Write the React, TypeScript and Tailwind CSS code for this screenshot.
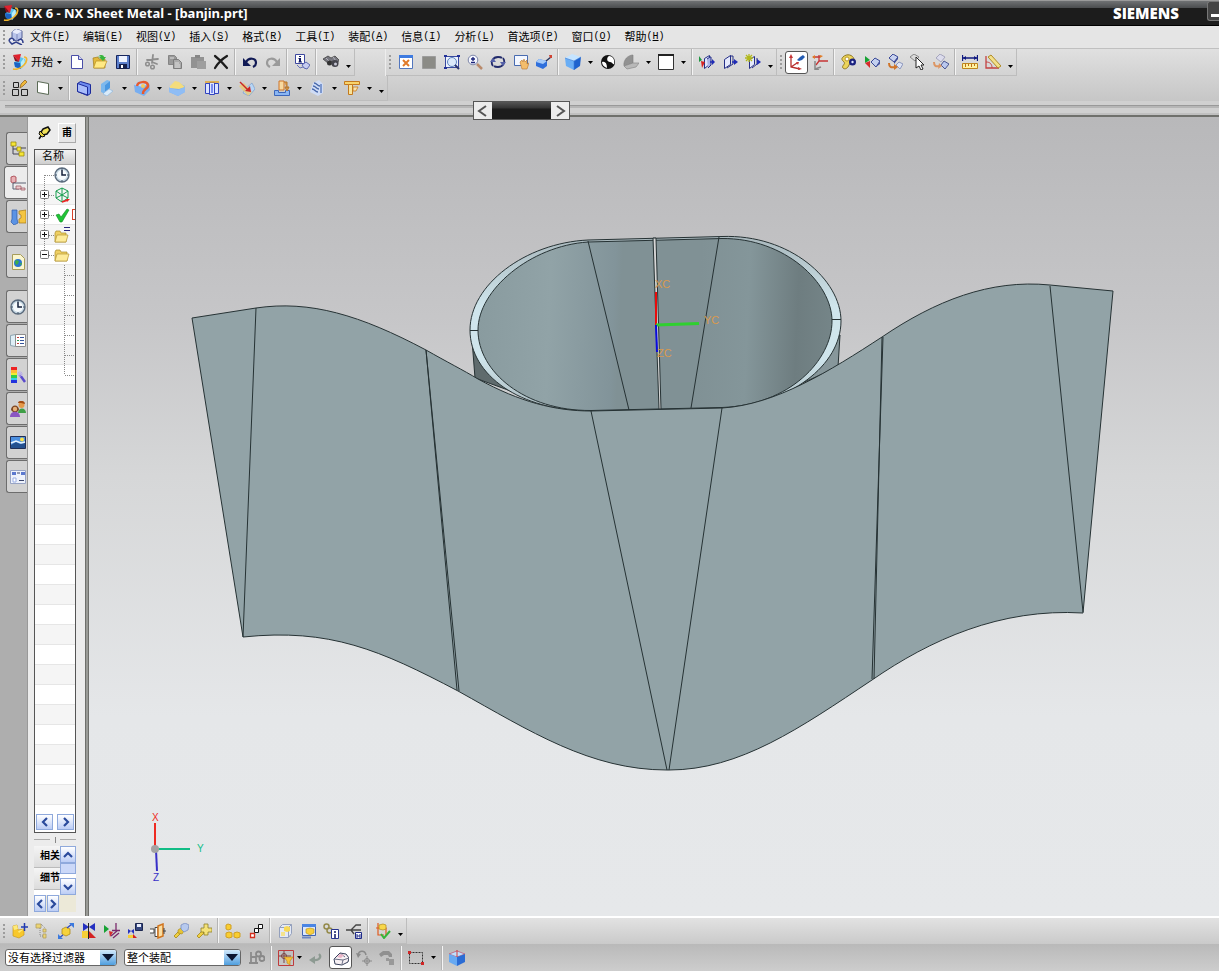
import { FC, ReactNode } from 'react';

const frame = { fill: 'none', strokeWidth: 1 };

const icons: Record<string, ReactNode> = {
  nx: (
    <>
      <path d="M8 3l5 2 1 4-5 6-6-2-1-4z" fill="#5cc4ee" />
      <path d="M9 8l3-4 1 5-4 6z" fill="#b9ecf7" />
      <path d="M2 8l6 1 1 6-6-2z" fill="#1b62c4" />
      <path d="M1 1l8-1-2 8z" fill="#e0212e" />
      <path d="M1 1l6 7-4-1z" fill="#8a0f1c" />
      <path d="M12 3c4 0 3 5 0 8s-7 5-11 4" stroke="#f0b52c" strokeWidth="1.700" fill="none" />
    </>
  ),
  part: (
    <>
      <path d="M4 3l4-3 6 2v7l-5 3-5-2z" fill="#b9c4ea" stroke="#515e94" />
      <path d="M4 3l5 2 5-3-6-2z" fill="#e9edfb" />
      <path d="M9 5v6" stroke="#7c88bb" fill="none" />
      <path d="M1 12c1-4 5-3 5 0M10 12c2-3 5-2 5 2M1 12l3 3 4-2 6 3" stroke="#31408a" strokeWidth="1.500" fill="#e7ebfa" />
    </>
  ),
  newFile: (
    <>
      <path d="M2.500 1.500h7l4 4v9h-11z" fill="#fff" stroke="#4a4fa8" />
      <path d="M9.500 1.500v4h4" fill="#d5d8f2" stroke="#4a4fa8" />
    </>
  ),
  open: (
    <>
      <path d="M1 4l5-1 1 2h6v9H2z" fill="#e2b93c" stroke="#a17c1c" strokeWidth=".7" />
      <path d="M4 7h11l-3 7H1.500z" fill="#ffe984" stroke="#b78f22" strokeWidth=".7" />
      <path d="M6 3c2-3 6-2 6 0h2l-3 4-4-4h2c-1-1-2-1-3 0z" fill="#37b53c" />
    </>
  ),
  save: (
    <>
      <path d="M1.500 1.500h13v13h-13z" fill="#5d80cc" stroke="#17265e" />
      <path d="M4 2h8v6H4z" fill="#eef3ff" />
      <path d="M4 10h8v5H4z" fill="#15204c" />
      <path d="M6 11h2v3H6z" fill="#fff" />
    </>
  ),
  cut: (
    <>
      <path d="M9 1L8 9M3 6l11-1M8 8l5 2" stroke="#8e8e8e" strokeWidth="1.800" fill="none" strokeLinecap="round" />
      <circle cx="3.500" cy="10" r="1.800" stroke="#8e8e8e" strokeWidth="1.500" fill="none" />
      <circle cx="8.500" cy="13" r="1.800" stroke="#8e8e8e" strokeWidth="1.500" fill="none" />
    </>
  ),
  copy: (
    <>
      <path d="M1.500 1.500h6l2 2v7h-8z" fill="#999" stroke="#858585" />
      <path d="M6.500 5.500h5l3 3v6h-8z" fill="#aaa" stroke="#7c7c7c" />
      <path d="M3 4h4M8 9h4M8 11h5M8 13h5" stroke="#ddd" />
    </>
  ),
  paste: (
    <>
      <path d="M1 3h13v11H1z" fill="#929292" />
      <path d="M5 1h5v3H5z" fill="#868686" />
      <path d="M7 7h9v8H7z" fill="#9e9e9e" />
    </>
  ),
  del: <path d="M2 2c4 3 8 7 12 12M14 2C9 5 5 9 2 14" stroke="#1c1c1c" strokeWidth="2.200" fill="none" strokeLinecap="round" />,
  undo: (
    <>
      <path d="M4 8c3-5 10-4 10 1 0 2-1 3-3 4" stroke="#111a55" strokeWidth="2.200" fill="none" />
      <path d="M1 4v8h8z" fill="#111a55" />
    </>
  ),
  redo: (
    <>
      <path d="M12 8C9 3 2 4 2 9c0 2 1 3 3 4" stroke="#9a9a9a" strokeWidth="2.200" fill="none" />
      <path d="M15 4v8H7z" fill="#9a9a9a" />
    </>
  ),
  info: (
    <>
      <path d="M1.500.500h9v9h-9z" fill="#fff" stroke="#3c479e" />
      <path d="M5 2h2v1H5zM4.500 4H7v3.500h1v1H4.500v-1H5V5h-.5z" fill="#111a66" />
      <path d="M8 11l4-3 4 3-3 4-3-1z" fill="#c7cdf1" stroke="#5f69b0" />
      <path d="M3 11l3 3 3-1" stroke="#6670b8" fill="none" />
    </>
  ),
  find: (
    <>
      <path d="M0 5l5-3 3 2 4-2 4 4-2 4-5-3-3 3z" fill="#77777f" stroke="#333" strokeWidth=".7" />
      <path d="M3 4l3 3M10 3l3 4" stroke="#b4b4bd" />
      <circle cx="6.500" cy="9" r="2.500" fill="#333" />
      <circle cx="12" cy="9.500" r="3.500" fill="#44444c" />
      <circle cx="12.500" cy="10" r="1.500" fill="#c6c6d4" />
    </>
  ),
  fit: (
    <>
      <path d="M1.500 1.500h13v13h-13z" fill="#fff" stroke="#5276bd" />
      <path d="M1 1h14v3H1z" fill="#3f7be0" />
      <path d="M5 6l6 6m0-6l-6 6" stroke="#e07a2a" strokeWidth="2" />
    </>
  ),
  gray: <path d="M1.500 2.500h13v12h-13z" fill="#8b8b86" stroke="#9c9c9c" />,
  zoomBox: (
    <>
      <path d="M1.500 2.500h13v11h-13z" fill="#eef3fd" stroke="#39499f" />
      <circle cx="8" cy="8" r="4.500" fill="#dbe9fb" stroke="#5d83bf" />
      <path d="M11 11l4 4" stroke="#29346f" strokeWidth="2" />
      <path d="M0 1h3v2H0zM13 1h3v2h-3zM0 13h3v2H0z" fill="#223199" />
    </>
  ),
  zoomIn: (
    <>
      <circle cx="6" cy="6" r="4.800" fill="#f5f7ff" stroke="#7c85a8" />
      <path d="M6 3v4M4 5h4M4 8.500h4" stroke="#1a237a" strokeWidth="1.300" />
      <path d="M10 10l5 5" stroke="#b98a6b" strokeWidth="2.500" />
    </>
  ),
  rotate: (
    <>
      <path d="M3 12C0 8 3 3 8 3c2 0 3 0 4 1M13 4c3 4 0 9-5 9-2 0-3 0-4-1" stroke="#222b6b" strokeWidth="1.800" fill="none" />
      <path d="M0 8l3-4 3 4zM16 8l-3 4-3-4z" fill="#5460a8" />
    </>
  ),
  pan: (
    <>
      <path d="M1.500 1.500h13v10h-13z" fill="#f3f7ff" stroke="#486bb0" />
      <path d="M7 8l2-2 1 2 1-3 1 3 2-2v4l2-1-2 6H9z" fill="#f3bd6c" stroke="#ba762c" strokeWidth=".6" />
    </>
  ),
  brush: (
    <>
      <path d="M0 8l3-3 8 2v5l-4 3-7-3z" fill="#2f6fdc" />
      <path d="M0 8l3-3 8 2-4 3z" fill="#a4caf9" />
      <path d="M10 7l5-4" stroke="#29355e" strokeWidth="1.500" />
      <path d="M13 1h3v3h-2z" fill="#cf4232" />
    </>
  ),
  cube: (
    <>
      <path d="M0 4l7-4 9 3-7 4z" fill="#c5e4ff" />
      <path d="M0 4l9 3v9l-8-4z" fill="#6aaef5" />
      <path d="M9 7l7-4-1 9-6 4z" fill="#1f63ce" />
      <path d="M0 4l9 3 7-4M9 7v9" stroke="#3a7cd8" strokeWidth=".6" fill="none" />
    </>
  ),
  contrast: (
    <>
      <circle cx="8" cy="8" r="7" fill="#111" />
      <path d="M9 2c4 0 6 4 5 8-1 1-2-2-4-2-3 0-4-4-1-6zM2 8c3-1 5 1 5 6-3-1-5-3-5-6z" fill="#fff" />
    </>
  ),
  wedge: (
    <>
      <path d="M1 12C0 6 5 1 10 1v8z" fill="#929292" stroke="#7d7d7d" strokeWidth=".6" />
      <path d="M10 9l6 0-3 4-9 2-3-3z" fill="#b9b9b9" stroke="#8a8a8a" strokeWidth=".7" />
    </>
  ),
  white: (
    <>
      <path d="M.500.500h15v15H.500z" fill="#fff" stroke="#333" />
      <path d="M0 1h16" stroke="#222" strokeWidth="2" />
    </>
  ),
  slabRed: (
    <>
      <path d="M5.500 4.500l5-3v9l-5 4z" fill="#dfe3fb" stroke="#252f86" />
      <path d="M8 5l3-2h1v8l-3 3" fill="#aab2e6" stroke="#252f86" />
      <path d="M11 8h3" stroke="#1f2bb5" strokeWidth="1.500" />
      <path d="M13 5l3 3-3 3z" fill="#1f2bb5" />
      <path d="M0 2v6l3-2z" fill="#1e9540" />
      <path d="M2 7l4 1-3 6z" fill="#d72121" />
    </>
  ),
  slab: (
    <>
      <path d="M2.500 5.500l6-4v9l-6 4z" fill="#e5e9fc" stroke="#252f86" />
      <path d="M5 14l6-4V2H8" fill="none" stroke="#252f86" />
      <path d="M10 8h3" stroke="#1f2bb5" strokeWidth="1.500" />
      <path d="M12 5l4 3-4 3z" fill="#1f2bb5" />
    </>
  ),
  slabStar: (
    <>
      <path d="M4.500 5.500l5-3v8l-5 4z" fill="#e5e9fc" stroke="#252f86" />
      <path d="M7 14l5-4V4" fill="none" stroke="#252f86" />
      <path d="M12 5l4 3-4 3z" fill="#1f2bb5" />
      <path d="M4 0v8M0 4h8M1 1l6 6M7 1L1 7" stroke="#b2b91c" strokeWidth="1.300" />
    </>
  ),
  csys: (
    <>
      <path d="M2 3v10l9 2M2 13l6-4" stroke="#b62d2d" fill="none" strokeWidth="1.300" />
      <path d="M0 4l2-4 2 4zM9 13l4 2-4 1zM7 8h3l-1 3z" fill="#c63636" />
      <path d="M8 6l3-3 3-2 2 2-3 3-3 1z" fill="#245cb3" />
    </>
  ),
  csysMove: (
    <>
      <path d="M1 3h7M7 1v6h9M7 7l-3 4" stroke="#c63636" fill="none" strokeWidth="1.300" />
      <path d="M3 7v8l6-2M3 15l4 1" stroke="#888" fill="none" strokeWidth="1.500" />
      <path d="M0 3l3-2v4zM8 1l3 1-3 2z" fill="#e07c28" />
    </>
  ),
  palette: (
    <>
      <path d="M2 3c4-4 10-2 11 2s-4 3-5 6-4 5-6 3 3-4 1-6-3-3-1-5z" fill="#ecd45c" stroke="#907722" />
      <circle cx="6" cy="5" r="2" fill="#fff" stroke="#b89828" />
      <circle cx="11.500" cy="8" r="3.500" fill="#1b2280" />
      <circle cx="11.500" cy="8" r="1.200" fill="#e2e6ff" />
    </>
  ),
  playCube: (
    <>
      <path d="M1 2v7l5-3z" fill="#17a233" />
      <path d="M1 9l5-2v7z" fill="#d62b2b" />
      <path d="M7 8l4-4 5 3-4 6z" fill="#c3d0ef" stroke="#384796" />
      <path d="M12 13l4-6v3z" fill="#46549f" />
    </>
  ),
  cubes: (
    <>
      <path d="M2 4l4-4 5 3-4 5z" fill="#c8d2ef" stroke="#384796" />
      <path d="M7 8l4-5v2l-4 5z" fill="#384796" />
      <path d="M9 11l3-3 4 2-3 5z" fill="#dde3f3" stroke="#8d97bd" />
      <path d="M2 9c0 4 2 5 6 4" stroke="#cf7429" strokeWidth="2" fill="none" />
      <path d="M7 10l4 3-4 3z" fill="#cf7429" />
    </>
  ),
  pointer: (
    <>
      <path d="M0 3l4-3 5 3-4 4z" fill="#dadada" stroke="#888" />
      <path d="M6 3v11l3-2 2 4 2-1-2-4h3z" fill="#fff" stroke="#222" />
    </>
  ),
  cubesGray: (
    <>
      <path d="M3 4l4-4 5 3-4 5z" fill="#dcdcec" stroke="#a5a5bd" />
      <path d="M8 11l3-4 5 3-4 5z" fill="#bac8ee" stroke="#4a5590" />
      <path d="M1 8c0 4 2 5 5 4" stroke="#dc9664" strokeWidth="2" fill="none" />
      <path d="M6 9l3 3-4 3z" fill="#dc9664" />
    </>
  ),
  ruler: (
    <>
      <path d="M.500 1v6M15.500 1v6M1 4h14" stroke="#111a80" strokeWidth="1.300" />
      <path d="M1 4l3-2v4zM15 4l-3-2v4z" fill="#111a80" />
      <path d="M.500 9.500h15v5H.500z" fill="#fff3a0" stroke="#be861d" />
      <path d="M3.500 10v3M6.500 10v2M9.500 10v3M12.500 10v2" stroke="#be6e1d" />
    </>
  ),
  angle: (
    <>
      <path d="M1 2v12h13" stroke="#c34242" fill="none" strokeWidth="1.300" />
      <path d="M1 8c4 0 6 2 6 6" stroke="#c34242" fill="none" />
      <path d="M3 3l3-2 10 11-3 2z" fill="#f2e08a" stroke="#b08a26" />
    </>
  ),
  sketch: (
    <>
      <path d="M1.500 2.500h5v5h-5zM.500 9.500h6v6h-6zM9.500 9.500h6v6h-6z" stroke="#222" {...frame} />
      <path d="M8 8l1-4 4-4 2 2-4 4z" fill="#f0b93a" stroke="#8a5a12" strokeWidth=".7" />
    </>
  ),
  sheet: <path d="M2.500 1.500l11 2v11l-11-2z" fill="#fff" stroke="#5a6a55" />,
  tab: (
    <>
      <path d="M1.500 3.500l3-2 10 3v9l-3 2-10-4z" fill="#6e8cf0" stroke="#1c2a9a" />
      <path d="M1.500 3.500l10 3.500v8l-10-3.500z" fill="#a9bdfb" stroke="#1c2a9a" />
    </>
  ),
  flange: (
    <>
      <path d="M2 4l6-4 3 1-5 4v9l-4-2z" fill="#7cb8ee" />
      <path d="M6 5l5-4v7l-5 4z" fill="#4a98e2" />
      <path d="M6 12l4-3 4 2-6 5-4-2z" fill="#d9ebfa" stroke="#8ab3dc" strokeWidth=".6" />
    </>
  ),
  contour: (
    <>
      <path d="M0 5l6-4 9 2 1 7-6 6-9-4z" fill="#78aef0" />
      <path d="M0 5l6-4 9 2-6 4z" fill="#bcd9fa" />
      <path d="M3 6c1-5 10-5 11-1s-5 3-5 9" stroke="#e65a2e" strokeWidth="2.500" fill="none" />
      <circle cx="9" cy="6" r="2" fill="#f7c95c" />
    </>
  ),
  lofted: (
    <>
      <path d="M0 8l8-6 8 4v6l-7 4-9-4z" fill="#7eb1f2" />
      <path d="M1 6l5-5 4 1 6 5-6 2-9-1z" fill="#f4dc7c" />
      <path d="M0 8l9 2 7-3v5l-7 4-9-4z" fill="#8fbdf5" />
    </>
  ),
  bend: (
    <>
      <path d="M1.500 3.500h4v10h-4zM5.500 2.500h5v12h-5zM10.500 3.500h4v10h-4z" fill="#dce4ff" stroke="#3244c0" />
      <path d="M7 4h2v9H7z" fill="#7b8df0" />
      <path d="M1 2h14" stroke="#e5a62e" strokeWidth="1.500" />
    </>
  ),
  unbend: (
    <>
      <path d="M6 9l7-6 3 6-6 7-6-3z" fill="#b7d6f6" stroke="#6d96c9" strokeWidth=".6" />
      <path d="M0 6l5-3 8 9-4 4z" fill="#f2c763" opacity=".7" />
      <path d="M1 2l8 8" stroke="#c92626" strokeWidth="1.500" />
      <path d="M12 12l-6-1 5-5z" fill="#c92626" />
    </>
  ),
  punch: (
    <>
      <path d="M.500 10.500h4v2h7v-2h4v5h-15z" fill="#8ab6f3" stroke="#3d66ba" />
      <path d="M5 1h5v9H5z" fill="#f7d9a0" stroke="#cf7429" />
      <path d="M10 2h3v6M11 7l2 4 2-4z" stroke="#b5742a" fill="#d99a4a" />
    </>
  ),
  louver: (
    <>
      <path d="M4 3l6-3 4 4v9l-5 3-8-4z" fill="#cfdcf5" />
      <path d="M5 3c3 0 3 3 6 3M4 6c3 0 3 3 6 3M3 9c3 0 3 3 6 3" stroke="#4666aa" fill="none" strokeWidth="1.300" />
      <path d="M12 4v9" stroke="#7d98cf" strokeWidth="2" />
    </>
  ),
  corner: (
    <>
      <path d="M.500 1.500h15v3H.500z" fill="#f9d46c" stroke="#c47a1e" />
      <path d="M4.500 4.500h4v10h-4z" fill="#f7e39c" stroke="#c47a1e" />
      <path d="M9 7h5l-2 4H9z" fill="#f9e3ac" stroke="#c47a1e" strokeWidth=".8" />
    </>
  ),
  pin: (
    <>
      <path d="M7 4l5-2 2 3-3 4-4 1-2-3z" fill="#f1e25a" stroke="#111" strokeWidth="1.500" />
      <path d="M4 6l5 5-3 1-3-3z" fill="#e6d13a" stroke="#111" />
      <path d="M5 11l-2 3" stroke="#111" strokeWidth="1.500" />
    </>
  ),
  // resource bar
  assembly: (
    <>
      <path d="M1 1h5v4H1zM7 6h4v4H7zM9 11h5v4H9z" fill="#f5e536" stroke="#9b8c12" strokeWidth=".8" />
      <path d="M3 5v8h6M3 8h4M11 7h5" stroke="#445" fill="none" />
    </>
  ),
  navigator: (
    <>
      <path d="M1 2l3-1 2 1v5l-3 1-2-1z" fill="#e8b2b6" stroke="#a33a44" strokeWidth=".8" />
      <path d="M3 8v6h6M3 8h13" stroke="#5b6172" fill="none" />
      <path d="M6 11h5v3H6zM11 13h4v2h-4z" fill="#eec9cc" stroke="#a0606a" strokeWidth=".8" />
    </>
  ),
  reuse: (
    <>
      <path d="M2 1h5v9l1 4-4 2-3-3 1-3z" fill="#5b93e4" stroke="#2f5cab" strokeWidth=".7" />
      <path d="M9 2l7-1v13H9v-4l2-1V6L9 5z" fill="#f4c542" stroke="#a77a15" strokeWidth=".7" />
    </>
  ),
  web: (
    <>
      <path d="M2.500.500h8l4 4v11h-12z" fill="#fbf6cf" stroke="#a79c5a" />
      <circle cx="8" cy="9" r="4" fill="#2a75d2" />
      <path d="M6 6l3 1-1 3-2 1-1-3zM10 9l2 0-1 3z" fill="#3fae49" />
    </>
  ),
  clock: (
    <>
      <circle cx="8" cy="8" r="7" fill="#c4d6e2" stroke="#5a6a7c" strokeWidth="1.300" />
      <circle cx="8" cy="8" r="5" fill="#f6fafc" />
      <path d="M8 3v5h4" stroke="#15203a" strokeWidth="1.500" fill="none" />
      <path d="M8 1v2M8 13v2M1 8h2M13 8h2" stroke="#46576b" />
    </>
  ),
  views: (
    <>
      <path d="M.500 2.500l5-1v12l-5-1z" fill="#dfeef6" stroke="#8da4b0" />
      <path d="M5.500 1.500h10v12h-10z" fill="#fff" stroke="#8d8d8d" />
      <path d="M7 4h2v1H7zM7 10h2v1H7z" fill="#c23a3a" />
      <path d="M7 7h2v1H7z" fill="#2a9a50" />
      <path d="M10 4.500h4M10 7.500h4M10 10.500h4" stroke="#35549b" />
    </>
  ),
  colors: (
    <>
      <path d="M1 0h6v3H1z" fill="#e22" />
      <path d="M1 3h6v3H1z" fill="#fb3" />
      <path d="M1 6h6v2H1z" fill="#ee3" />
      <path d="M1 8h6v3H1z" fill="#3c4" />
      <path d="M1 11h6v2H1z" fill="#3ce" />
      <path d="M1 13h6v3H1z" fill="#23d" />
      <path d="M10 8l5 7" stroke="#5a4acd" strokeWidth="2.500" />
      <path d="M10 4v6M7 7h6M8 5l4 4M12 5L8 9" stroke="#b9aee8" />
    </>
  ),
  people: (
    <>
      <circle cx="11.500" cy="4" r="3" fill="#e69a4a" />
      <path d="M8 2c0-3 7-3 7 1l-4-1z" fill="#a34c12" />
      <path d="M8 12c0-6 8-6 8 0z" fill="#3f9f46" />
      <path d="M1 9c0-6 8-6 8 0l-2 2H3z" fill="#7d4622" />
      <circle cx="5" cy="8" r="2.200" fill="#e8b27a" />
      <path d="M0 16c0-7 10-7 10 0z" fill="#8a56c2" />
    </>
  ),
  scene: (
    <>
      <path d="M.500 1.500h15v12H.500z" fill="#4b8fe0" stroke="#222f55" />
      <path d="M1 10l5-3 4 2 5-1v5H1z" fill="#24508f" />
      <path d="M1 8l5-2 5 2 4-1" stroke="#e7f3ff" strokeWidth="1.500" fill="none" />
      <circle cx="12" cy="4.500" r="2" fill="#fce34a" />
    </>
  ),
  layout: (
    <>
      <path d="M.500 1.500h15v13H.500z" fill="#eef2fb" stroke="#98a4c4" />
      <path d="M2 3h4v3H2zM11 3h4v3h-4z" fill="#5c79cf" />
      <path d="M3 9h3v4H3z" fill="#fff" stroke="#9aaee4" />
      <path d="M9 11.500h5M7 4h3" stroke="#3b456b" />
    </>
  ),
  // part tree
  csysCube: (
    <>
      <path d="M2 4l6-3 6 3v7l-6 4-6-4zM2 4l6 4 6-4M8 8v7M2 11l6-3 6 3M8 1v7" stroke="#159c4c" fill="none" />
      <path d="M8 15l6-2" stroke="#e22" strokeWidth="1.500" />
      <path d="M16 12l-4 0 1 3z" fill="#e22" />
    </>
  ),
  check: <path d="M2 8l3-1 2 3 6-8 2 1-7 12H6z" fill="#1fc436" stroke="#128a24" strokeWidth=".6" />,
  folder: (
    <>
      <path d="M1 5l1-2h4l1 2h6v9H1z" fill="#efcf63" stroke="#a88a2a" strokeWidth=".7" />
      <path d="M3 7h12l-2 7H1z" fill="#fdeb9a" stroke="#b59633" strokeWidth=".7" />
    </>
  ),
  folderEq: (
    <>
      <path d="M1 6l1-2h4l1 2h5v9H1z" fill="#efcf63" stroke="#a88a2a" strokeWidth=".7" />
      <path d="M3 8h11l-2 7H1z" fill="#fdeb9a" stroke="#b59633" strokeWidth=".7" />
      <path d="M10 .500h6M10 3.500h6" stroke="#29237e" />
    </>
  ),
  // assembly bar
  addPart: (
    <>
      <path d="M1 3l4-1 1 5 6-1v6l-5 3-6-2z" fill="#f8c82c" stroke="#c99b24" strokeWidth=".7" />
      <path d="M1 3l4-1 1 4-4 1zM6 8l6-2-5 4z" fill="#fdea7c" />
      <path d="M12.500 0v8M9 4h7" stroke="#223bb1" strokeWidth="1.500" />
    </>
  ),
  newPart: (
    <>
      <path d="M1 1h5v4H1zM8 6h3v3H8zM8 11h3v4H8z" fill="#ebd473" stroke="#b1a060" strokeWidth=".8" />
      <path d="M6 1l4 4M5 5v8h3" stroke="#888" fill="none" strokeDasharray="1 1" />
    </>
  ),
  movePart: (
    <>
      <path d="M4 6l4-2 4 2v5l-4 2-4-2z" fill="#f6d23c" stroke="#b18d18" strokeWidth=".8" />
      <path d="M9 5l5-4M5 12l-4 3" stroke="#2c49c3" strokeWidth="1.300" />
      <path d="M16 0v5l-5-5zM0 16v-5l5 5z" fill="#3b7ade" />
    </>
  ),
  mirror: (
    <>
      <path d="M2 0l6 4-6 4zM14 0L8 4l6 4z" fill="#2430c0" />
      <path d="M1 8h6v7H1z" fill="#f6cf36" />
      <path d="M8 8l7 7H8z" fill="#d42121" />
      <path d="M7.500 0v16" stroke="#222" />
    </>
  ),
  constrain: (
    <>
      <path d="M0 2v8l5-4z" fill="#17a233" />
      <path d="M5 8l4 1-3 5z" fill="#d62b2b" />
      <path d="M12 0v7M8 7.500h8M9 15l6-5M7 13l6-5" stroke="#7b2a6c" strokeWidth="1.300" />
    </>
  ),
  remember: (
    <>
      <path d="M1 6l3 2-3 3zM7 6L4 8l3 3z" fill="#2430c0" />
      <path d="M1 12h5v3H1z" fill="#f6cf36" />
      <path d="M6 11l4 4H6z" fill="#d42121" />
      <path d="M8.500.500h7v7h-7z" fill="#37477f" stroke="#1c2750" />
      <path d="M10 1h4v3h-4z" fill="#e7ecfb" />
    </>
  ),
  explode: (
    <>
      <path d="M0 6h4v4H0M5 4.500h3v9H5z" fill="#fff" stroke="#444" />
      <path d="M8 3l5-2v12l-5 2z" fill="#f8dda2" stroke="#d1741d" strokeWidth="1.500" />
      <path d="M13 8h3M14 5v6" stroke="#444" />
    </>
  ),
  wrench: (
    <>
      <path d="M1 13l5-5 2 2-5 5z" fill="#f0d042" stroke="#a48717" strokeWidth=".8" />
      <path d="M5 7l3-2 3 3-2 3-4-1z" fill="#e5c335" stroke="#a48717" strokeWidth=".6" />
      <path d="M8 2l4-2 4 2-1 5-4 2-3-3z" fill="#b6c9ee" stroke="#7a8fc0" strokeWidth=".8" />
    </>
  ),
  wrenchAdd: (
    <>
      <path d="M1 13l5-5 2 2-5 5z" fill="#f0d042" stroke="#a48717" strokeWidth=".8" />
      <path d="M8 1h4v4h4v4h-4v3H8V9H5V5h3z" fill="#f4e27a" stroke="#8f8126" strokeWidth=".8" />
    </>
  ),
  parts: (
    <path
      d="M1 2l2-1 3 1v4l-3 1-2-1zM1 10l3-1 3 1v4l-3 1-3-1zM9 10l3-1 3 1v4l-3 1-3-1z"
      fill="#f9cd30"
      stroke="#d0a024"
      strokeLinejoin="round"
    />
  ),
  chain: (
    <>
      <path d="M10.500 1.500h4v4h-4zM6.500 5.500h4v4h-4z" fill="#fff" stroke="#111" />
      <path d="M2.500 10.500h4v4h-4z" fill="#fff" stroke="#d5301f" strokeWidth="1.300" />
    </>
  ),
  boxes: (
    <>
      <path d="M2.500 4.500l3-3 9 0v9l-3 4-9 0z" fill="#e3e9f7" stroke="#94a0bc" />
      <path d="M2.500 4.500h9v10M11.500 4.500l3-3" stroke="#94a0bc" fill="none" />
      <path d="M7 4l3-1 3 1v4l-3 1-3-1z" fill="#f7d956" />
      <path d="M4 9h4v4H4z" fill="#f4e38d" />
    </>
  ),
  boxesWin: (
    <>
      <path d="M2.500 1.500h13v11h-13z" fill="#dbe7fb" stroke="#3f63b4" />
      <path d="M2 1h14v3H2z" fill="#4a85e4" />
      <path d="M6 6l4-1 4 1v4l-4 2-4-2z" fill="#f7cf3e" stroke="#b68e18" strokeWidth=".6" />
      <path d="M2 14.500h9" stroke="#6b86c4" strokeWidth="2" />
    </>
  ),
  linkInfo: (
    <>
      <circle cx="3.500" cy="3.500" r="2.500" stroke="#948a4a" strokeWidth="1.500" fill="none" />
      <circle cx="6.500" cy="7.500" r="2.500" stroke="#948a4a" strokeWidth="1.500" fill="none" />
      <path d="M8.500 6.500h7v9h-7z" fill="#fff" stroke="#27348f" />
      <path d="M12 8v2M12 11v4" stroke="#111a66" strokeWidth="1.500" />
    </>
  ),
  treeInfo: (
    <>
      <path d="M0 7h5M5 7l5-5h5M5 7h10M5 7l3 4" stroke="#444" strokeWidth="1.300" fill="none" />
      <path d="M9.500 9.500h6v6h-6z" fill="#fff" stroke="#1f2a88" />
      <path d="M11 11v4M14 11v4M11 13h3" stroke="#1f2a88" />
    </>
  ),
  partCheck: (
    <>
      <path d="M3 0v12h6M1 5h10v7" stroke="#df5a1e" strokeWidth="1.200" fill="none" />
      <path d="M4 2l4-1 3 1v4l-3 1-4-1z" fill="#f8d74b" stroke="#b18d18" strokeWidth=".7" />
      <path d="M6 11l3 4 6-7" stroke="#36b53b" strokeWidth="2" fill="none" />
    </>
  ),
  // selection bar
  linkGray: (
    <>
      <path d="M2 2v11h6M2 7h5v6M0 13h9" stroke="#8b8b8b" strokeWidth="1.800" fill="none" />
      <circle cx="9.500" cy="4" r="2.500" stroke="#888" strokeWidth="1.800" fill="none" />
      <circle cx="13" cy="8.500" r="2.500" stroke="#888" strokeWidth="1.800" fill="none" />
    </>
  ),
  snap: (
    <>
      <path d="M.500.500h15v15H.500z" stroke="#bf3b3b" {...frame} />
      <path d="M6 1v12M1 6h12" stroke="#7a4242" />
      <circle cx="6" cy="6" r="2.500" stroke="#7a4242" {...frame} />
      <path d="M6 7h9l-3 4v4l-3-2v-2z" fill="#f6c13a" stroke="#b8841a" strokeWidth=".6" />
    </>
  ),
  back: (
    <>
      <path d="M12 4c3 3 0 7-6 6" stroke="#8d9a92" strokeWidth="2.200" fill="none" />
      <path d="M2 10l6-4v8z" fill="#8d9a92" />
    </>
  ),
  eraser: (
    <>
      <path d="M1 9l6-6 6 1 3 4-1 4-6 3-7-1z" fill="#f7f1f4" stroke="#39425c" />
      <path d="M9 14l1-4 6-2M10 10L1 9M7 3l5 4" stroke="#6b6f85" fill="none" />
      <path d="M4 7l3-3 4 1-3 3z" fill="#ecb5c8" />
    </>
  ),
  undoPick: (
    <>
      <path d="M2 5c1-5 7-5 8 0" stroke="#8a8a8a" strokeWidth="1.500" fill="none" />
      <path d="M0 3l2 5 3-4z" fill="#8a8a8a" />
      <path d="M11 6v10M6 11h10" stroke="#8a8a8a" />
      <circle cx="11" cy="11" r="2.500" stroke="#8a8a8a" {...frame} />
    </>
  ),
  pickNext: (
    <>
      <path d="M0 4l4-3h6l3 3v3h-3L9 5H5L2 7z" fill="#909090" />
      <path d="M10 9h5v6h-5zM7 8h3v3H7z" fill="#999" />
    </>
  ),
  marquee: (
    <>
      <path d="M1.500 2.500h13v11h-13z" stroke="#333" strokeDasharray="2 1" {...frame} />
      <path d="M0 1h3v3H0zM13 12h3v3h-3z" fill="#cf2626" />
    </>
  ),
  shaded: (
    <>
      <path d="M0 4l8-3 8 3-8 3z" fill="#bfe0fd" stroke="#c04c6a" strokeWidth=".7" />
      <path d="M0 4l8 3v9l-8-4z" fill="#67a9f2" />
      <path d="M8 7l8-3v8l-8 4z" fill="#2b6cd4" />
      <path d="M8 0v7" stroke="#d23b3b" />
    </>
  ),
};

const Glyph: FC<{ name: string }> = ({ name }) => (
  <svg viewBox="0 0 16 16" className="size-4 shrink-0" aria-hidden="true">
    {icons[name]}
  </svg>
);

const Caret = () => (
  <svg viewBox="0 0 5 3" className="h-[3px] w-[5px]" aria-hidden="true">
    <path d="M0 0h5L2.500 3z" fill="#000" />
  </svg>
);

const Grip = () => (
  <span className="flex w-2 shrink-0 flex-col items-center justify-center gap-[2px]">
    {[0, 1, 2, 3].map((n) => (
      <span key={n} className="size-[2px] bg-[#9c9c9c]" />
    ))}
  </span>
);

const Divider = () => (
  <span className="flex w-[6px] shrink-0 justify-center">
    <span className="w-[2px] border-l border-[#b4b4b4] bg-[#f4f4f4]" />
  </span>
);

// Entries: icon name, '|' divider, 'v' drop-down arrow, '>' overflow arrow, '*name' pressed
const ToolItems: FC<{ items: string[] }> = ({ items }) => (
  <>
    {items.map((item, index) => {
      if (item === '|') return <Divider key={index} />;
      if (item === 'v' || item === '>') {
        return (
          <button
            key={index}
            aria-label={item === 'v' ? 'More' : 'Toolbar options'}
            className={`flex w-3 shrink-0 justify-center ${item === 'v' ? 'items-center' : 'items-end pb-[7px]'}`}
          >
            <Caret />
          </button>
        );
      }
      const pressed = item.startsWith('*');
      const name = pressed ? item.slice(1) : item;
      return (
        <button
          key={index}
          aria-label={name}
          className={`flex h-[23px] w-[23px] shrink-0 items-center justify-center self-center ${
            pressed ? 'rounded-[3px] border border-[#555] bg-white' : ''
          }`}
        >
          <Glyph name={name} />
        </button>
      );
    })}
  </>
);

const ToolGroup: FC<{ items: string[]; children?: ReactNode }> = ({ items, children }) => (
  <div role="toolbar" className="flex border-r border-b border-[#bdbdbd]">
    <Grip />
    {children}
    <ToolItems items={items} />
  </div>
);

const menus = [
  ['文件', 'F'],
  ['编辑', 'E'],
  ['视图', 'V'],
  ['插入', 'S'],
  ['格式', 'R'],
  ['工具', 'T'],
  ['装配', 'A'],
  ['信息', 'I'],
  ['分析', 'L'],
  ['首选项', 'P'],
  ['窗口', 'O'],
  ['帮助', 'H'],
];

const standardTools = [
  'newFile', 'open', 'save', '|', 'cut', 'copy', 'paste', 'del', '|',
  'undo', 'redo', '|', 'info', '|', 'find', '>',
];
const viewTools = [
  'fit', 'gray', 'zoomBox', 'zoomIn', 'rotate', 'pan', 'brush', '|', 'cube', 'v',
  'contrast', 'wedge', 'v', 'white', 'v', '|', 'slabRed', 'slab', 'slabStar', '>',
];
const utilityTools = [
  '*csys', 'csysMove', '|', 'palette', 'playCube', 'cubes', 'pointer', 'cubesGray', '|',
  'ruler', 'angle', '>',
];
const sheetMetalTools = [
  'sketch', 'sheet', 'v', '|', 'tab', 'flange', 'v', 'contour', 'v', 'lofted', 'v',
  'bend', 'v', 'unbend', 'v', 'punch', 'v', 'louver', 'v', 'corner', 'v', '>',
];
const assemblyTools = [
  'addPart', 'newPart', 'movePart', 'mirror', 'constrain', 'remember', 'explode', 'wrench',
  'wrenchAdd', '|', 'parts', 'chain', '|', 'boxes', 'boxesWin', 'linkInfo', 'treeInfo', '|',
  'partCheck', '>',
];

const resourceTabs = [
  ['assembly', 'navigator', 'reuse'],
  ['web'],
  ['clock', 'views', 'colors', 'people', 'scene', 'layout'],
];

const treeRows = [
  { icon: 'clock' },
  { icon: 'csysCube', expand: '+' },
  { icon: 'check', expand: '+' },
  { icon: 'folderEq', expand: '+' },
  { icon: 'folder', expand: '-' },
];

const TitleBar = () => (
  <header className="flex h-[26px] shrink-0 items-center border-t border-b border-t-[#9a9a9a] border-b-black bg-[linear-gradient(#707274_0px,#4a4c4e_7px,#1c1c1c_7px)] pl-[3px] text-white">
    <Glyph name="nx" />
    <h1 className="ml-1 font-['Noto_Sans'] text-[13px] leading-4 font-bold whitespace-nowrap">
      NX 6 - NX Sheet Metal - [banjin.prt]
    </h1>
    <span className="mr-[28px] ml-auto font-['Open_Sans'] text-[15px] leading-4 font-extrabold">
      SIEMENS
    </span>
    <button
      aria-label="Minimize"
      className="flex h-5 w-3 items-center justify-end self-start rounded-l-[3px] border border-r-0 border-[#777] bg-[#444]"
    >
      <span className="mt-2 h-[3px] w-2 bg-white" />
    </button>
  </header>
);

const MenuBar = () => (
  <nav className="flex h-[22px] shrink-0 items-center bg-[#e5e5e5]">
    <div className="flex h-5">
      <Grip />
    </div>
    <Glyph name="part" />
    <ul className="ml-[6px] flex gap-[13px]">
      {menus.map(([label, key]) => (
        <li key={label}>
          <button className="flex items-center text-[11px] leading-4 whitespace-nowrap">
            {label}
            <span className="font-['Liberation_Mono'] text-[10px]">
              (<u>{key}</u>)
            </span>
          </button>
        </li>
      ))}
    </ul>
  </nav>
);

const DockHandle = () => (
  <div className="absolute top-0 left-[473px] z-10 flex h-[19px] w-[97px] border border-[#555] bg-[linear-gradient(#555_0px,#333_6px,#1c1c1c_7px)]">
    {['M11 3L4 8l7 5', 'M5 3l7 5-7 5'].map((d, index) => (
      <button
        key={d}
        aria-label={index ? 'Scroll right' : 'Scroll left'}
        className={`flex w-[18px] items-center justify-center bg-[#ececec] ${index ? 'ml-auto' : ''}`}
      >
        <svg viewBox="0 0 16 16" className="size-4">
          <path d={d} fill="none" stroke="#555" strokeWidth="2" />
        </svg>
      </button>
    ))}
  </div>
);

const ResourceBar = () => (
  <aside className="flex w-7 shrink-0 flex-col items-end gap-3 border-r border-[#999] bg-[#aeaeae] pt-[15px]">
    {resourceTabs.map((group, index) => (
      <div key={index} className="flex flex-col items-end gap-px">
        {group.map((name) => (
          <button
            key={name}
            aria-label={name}
            className={`flex h-[33px] items-center justify-end rounded-l-[3px] border border-r-0 border-[#6d6d6d] pr-px ${
              name === 'navigator' ? 'w-[23px] bg-[#ececec]' : 'w-[21px] bg-[#d2d2d2]'
            }`}
          >
            <Glyph name={name} />
          </button>
        ))}
      </div>
    ))}
  </aside>
);

const TreeRow: FC<{ index: number }> = ({ index }) => {
  const row = treeRows[index];
  const dots = { stroke: '#888', strokeDasharray: '1 1', fill: 'none' };
  return (
    <li className="flex h-5 shrink-0 items-center overflow-hidden border-b border-[#e6e6e6] odd:bg-white even:bg-[#f5f5f5]">
      {row && (
        <>
          <button aria-label="Toggle" className="h-5 w-[19px] shrink-0">
            <svg viewBox="0 0 19 20" className="h-5 w-[19px]">
              <path d={`M9.500 ${index ? 0 : 10}V${index === 4 ? 10 : 20}M10 10.500h9`} {...dots} />
              {row.expand && (
                <>
                  <rect x="5.500" y="5.500" width="8" height="8" rx="1" fill="#fff" stroke="#777" />
                  <path d={row.expand === '+' ? 'M7 9.500h5M9.500 7v5' : 'M7 9.500h5'} stroke="#111" />
                </>
              )}
            </svg>
          </button>
          <Glyph name={row.icon} />
          {row.icon === 'check' && (
            <span className="ml-[2px] h-[11px] w-1 shrink-0 border border-r-0 border-[#d8432b]" />
          )}
        </>
      )}
      {index > 4 && index < 11 && (
        <svg viewBox="0 0 40 20" className="h-5 w-10 shrink-0">
          <path d={`M29.500 0V${index === 10 ? 10 : 20}M30 10.500h10`} {...dots} />
        </svg>
      )}
    </li>
  );
};

const arrows = {
  left: 'M8 2L4 6l4 4',
  right: 'M4 2l4 4-4 4',
  up: 'M2 8l4-4 4 4',
  down: 'M2 4l4 4 4-4',
};

const ScrollButton: FC<{ dir: keyof typeof arrows; className: string }> = ({ dir, className }) => (
  <button
    aria-label={`Scroll ${dir}`}
    className={`flex items-center justify-center border border-[#8fa9dc] bg-linear-to-b from-white to-[#bccdf5] ${className}`}
  >
    <svg viewBox="0 0 12 12" className="size-3 shrink-0">
      <path d={arrows[dir]} fill="none" stroke="#2a4a9c" strokeWidth="2.200" />
    </svg>
  </button>
);

const NavigatorPanel = () => (
  <section className="flex w-[57px] shrink-0 flex-col bg-[#ececec] pr-[9px] pl-[6px]">
    <div className="flex h-8 items-center justify-between">
      <button aria-label="Pin" className="ml-[2px]">
        <Glyph name="pin" />
      </button>
      <button className="h-5 w-[18px] border border-t-white border-r-[#aaa] border-b-[#aaa] border-l-white bg-[#e6e6e6] text-[10px] leading-4 font-bold">
        甫
      </button>
    </div>
    <div className="flex flex-1 flex-col border border-[#555] bg-white">
      <h2 className="h-[15px] shrink-0 border-b border-[#aaa] bg-linear-to-b from-[#f3f3f3] to-[#cfcfcf] pl-[7px] text-[11px] leading-[13px]">
        名称
      </h2>
      <ul className="flex h-0 flex-1 flex-col overflow-hidden">
        {Array.from({ length: 32 }, (_, index) => (
          <TreeRow key={index} index={index} />
        ))}
      </ul>
      <div className="flex h-[18px] shrink-0 justify-between px-px">
        <ScrollButton dir="left" className="h-4 w-[17px]" />
        <ScrollButton dir="right" className="h-4 w-[17px]" />
      </div>
    </div>
    <div className="flex h-[13px] shrink-0 items-center justify-between">
      <span className="h-px w-4 bg-[#aaa]" />
      <span className="h-[6px] w-px bg-[#888]" />
      <span className="h-px w-4 bg-[#aaa]" />
    </div>
    <div className="flex h-[49px] shrink-0">
      <div className="w-[26px] bg-white">
        {['相关', '细节'].map((label) => (
          <h3
            key={label}
            className="h-[22px] border-b border-[#bbb] bg-linear-to-b from-[#f5f5f5] to-[#dcdcdc] pl-[6px] text-[10px] leading-5 font-bold whitespace-nowrap"
          >
            {label}
          </h3>
        ))}
      </div>
      <div className="flex w-4 flex-col">
        <ScrollButton dir="up" className="h-[17px] w-4" />
        <span className="h-[11px] border border-[#8fa9dc] bg-[#cbd8f8]" />
        <span className="flex-1 bg-white" />
        <ScrollButton dir="down" className="h-[17px] w-4" />
      </div>
    </div>
    <div className="mb-1 flex h-[17px] shrink-0 gap-px bg-[#ece9d8]">
      <ScrollButton dir="left" className="w-3" />
      <ScrollButton dir="right" className="w-3" />
    </div>
  </section>
);

const outerRing =
  'M588 240L722 236.500C790 234 841 280 841 321C841 365 790 405 722 408L591 411C520 411 470 375 470 330C470 285 525 243 588 240Z';
const innerRing =
  'M588 242L722 238.500C785 238 832 283 832 321C832 360 790 405 722 407.500L591 410.500C525 411 478 372 478 330C478 290 530 246 588 242Z';
const sheetOutline =
  'M192 318L256 308C310 300 360 315 426 350C447 362 463 370 478 379C520 402 555 411 591 411L722 408C775 405 830 371 882 337C935 301 990 279 1050 285L1113 291L1083 613C1000 608 930 640 872 680C800 728 740 770 669 770L667 770C590 770 530 731 458 691C380 650 330 628 243 637Z';

const Viewport = () => (
  <main className="flex min-w-0 flex-1 bg-[linear-gradient(#b8b8ba,#c6c6c8_25%,#d6d7d8_45%,#e5e7e9_75%,#e6e8ea)]">
    <svg
      viewBox="89 117 1130 799"
      className="h-full w-full font-['Liberation_Sans'] text-[11px]"
      role="img"
      aria-label="banjin.prt"
    >
      <defs>
        <linearGradient id="bore" gradientUnits="userSpaceOnUse" x1="478" y1="320" x2="832" y2="335">
          <stop offset="0" stopColor="#899b9f" />
          <stop offset=".2" stopColor="#91a3a7" />
          <stop offset=".38" stopColor="#82949a" />
          <stop offset=".4" stopColor="#809195" />
          <stop offset=".62" stopColor="#809195" />
          <stop offset=".76" stopColor="#84969a" />
          <stop offset=".9" stopColor="#6e7d80" />
          <stop offset="1" stopColor="#758588" />
        </linearGradient>
        <linearGradient id="rim" x1="0" y1="0" x2="0" y2="1">
          <stop offset="0" stopColor="#a9b8bd" />
          <stop offset=".4" stopColor="#cfe5ec" />
          <stop offset=".7" stopColor="#cfe5ec" />
          <stop offset="1" stopColor="#a9b8bd" />
        </linearGradient>
      </defs>
      <g stroke="#263234" strokeWidth="1" strokeLinejoin="round">
        <path d="M472 340L475 378L560 409L500 380Z" fill="#5f6b6d" />
        <path d="M840 335L838 367L760 402L815 365Z" fill="#87979b" />
        <path d={outerRing} fill="url(#rim)" />
        <path d={innerRing} fill="url(#bore)" />
        <path d="M470 330.500h8M832 319.500h9" />
        <path d="M588 241L629 410M719 237L691 408" />
        <path d="M653 238L656 238L661 409L659 409Z" fill="#d5d5d5" />
        <path d={sheetOutline} fill="#92a3a7" />
        <path
          d="M256 308L243 637M426 350L457 690M426 350L459 691M591 411L667 770M722 408L669 770M883 337L872 679M882 337L874 679M1050 286L1083 612"
          fill="none"
        />
      </g>
      <g strokeWidth="2" fill="none">
        <path d="M656 325V292" stroke="#e80c0c" />
        <path d="M656 325L699 323.500" stroke="#2fd02f" strokeWidth="3" />
        <path d="M656 325L657 352" stroke="#0a0adf" />
        <path d="M155 848V823" stroke="#ee2b22" />
        <path d="M155 849H190" stroke="#12bd86" />
        <path d="M156 850L157 871" stroke="#3730c8" />
      </g>
      <circle cx="155" cy="849" r="4" fill="#a3a3a3" />
      <g fill="#d99a4e">
        <text x="655" y="288">XC</text>
        <text x="704" y="324">YC</text>
        <text x="657" y="357">ZC</text>
      </g>
      <g className="text-[10px]">
        <text x="152" y="821" fill="#ee2b22">X</text>
        <text x="197" y="852" fill="#12bd86">Y</text>
        <text x="153" y="881" fill="#3730c8">Z</text>
      </g>
    </svg>
  </main>
);

const FilterSelect: FC<{ label: string; value: string; className: string }> = ({ label, value, className }) => (
  <div className={`relative flex h-[17px] ${className}`}>
    <select
      aria-label={label}
      className="block h-[17px] w-full appearance-none rounded-[3px] border border-[#666] bg-white pl-[2px] text-[11px] leading-[14px]"
    >
      <option>{value}</option>
    </select>
    <span className="pointer-events-none absolute inset-y-px right-px flex w-4 items-center justify-center rounded-r-[2px] bg-linear-to-b from-[#d3e9fb] to-[#4d9ede]">
      <svg viewBox="0 0 12 7" className="h-[7px] w-3">
        <path d="M0 0h12L6 7z" fill="#0b1430" />
      </svg>
    </span>
  </div>
);

const SelectionBar = () => (
  <div className="flex h-[27px] shrink-0 items-center bg-[linear-gradient(#b9b9b9,#cdcdcd)] pl-[5px]">
    <FilterSelect label="Type filter" value="没有选择过滤器" className="w-[112px]" />
    <FilterSelect label="Selection scope" value="整个装配" className="mr-1 ml-[7px] w-[117px]" />
    <div role="toolbar" className="flex h-6">
      <ToolItems items={['linkGray', '|', 'snap']} />
      <button aria-label="Snap options" className="flex w-[6px] items-center">
        <Caret />
      </button>
      <ToolItems items={['back']} />
      <span className="w-[3px]" />
      <ToolItems items={['*eraser', 'undoPick', 'pickNext', '|', 'marquee', 'v', '|', 'shaded']} />
    </div>
  </div>
);

export default function App() {
  return (
    <div className="flex min-h-screen flex-col overflow-hidden bg-[#d6d6d6] font-['Liberation_Sans','Noto_Sans_CJK_SC',sans-serif] text-black">
      <TitleBar />
      <MenuBar />
      <div className="shrink-0 border-t border-[#c0c0c0] bg-linear-to-b from-[#e0e0e0] to-[#c6c6c6]">
        <div className="flex h-[27px]">
          <ToolGroup items={standardTools}>
            <button className="flex items-center text-[11px] whitespace-nowrap">
              <span className="flex w-[23px] justify-center">
                <Glyph name="nx" />
              </span>
              <span className="w-[22px]">开始</span>
              <span className="flex w-3 justify-center">
                <Caret />
              </span>
            </button>
          </ToolGroup>
          <div className="w-[31px] shrink-0 border-r border-[#ededed]" />
          <ToolGroup items={viewTools} />
          <ToolGroup items={utilityTools} />
        </div>
        <div className="flex h-[25px]">
          <ToolGroup items={sheetMetalTools} />
        </div>
      </div>
      <div className="relative flex h-4 shrink-0 flex-col justify-between border-b-2 border-[#6f706c] bg-[#d0d0d0] pt-1">
        <DockHandle />
        <span className="ml-[5px] h-[3px] border-t border-[#999] bg-[#b6b6b6]" />
        <span className="h-[2px] bg-[#c0c0c0]" />
      </div>
      <div className="flex flex-1">
        <ResourceBar />
        <NavigatorPanel />
        <div className="w-1 shrink-0 border-x border-[#6f706c] bg-[#9a9b97]" />
        <Viewport />
      </div>
      <div className="flex h-7 shrink-0 border-t-2 border-white bg-linear-to-b from-[#e2e2e2] to-[#cacaca]">
        <ToolGroup items={assemblyTools} />
      </div>
      <SelectionBar />
    </div>
  );
}
